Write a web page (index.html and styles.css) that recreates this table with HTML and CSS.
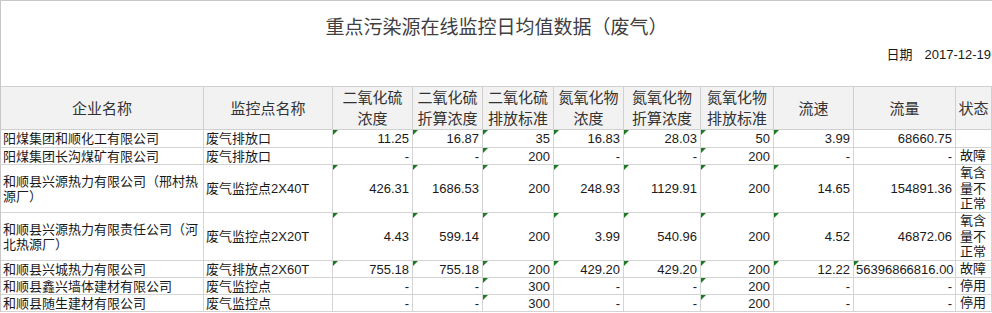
FILE: index.html
```html
<!DOCTYPE html>
<html lang="zh-CN">
<head>
<meta charset="utf-8">
<title>重点污染源在线监控日均值数据（废气）</title>
<link rel="stylesheet" href="styles.css">
</head>
<body>
<div class="sheet">
  <div class="head">
    <div class="title">重点污染源在线监控日均值数据（废气）</div>
    <div class="date"><span class="date-label">日期</span><span class="date-value">2017-12-19</span></div>
  </div>
  <table class="grid">
    <colgroup>
      <col class="c1"><col class="c2"><col class="c3"><col class="c4"><col class="c5"><col class="c6"><col class="c7"><col class="c8"><col class="c9"><col class="c10"><col class="c11">
    </colgroup>
    <thead>
      <tr>
        <th>企业名称</th>
        <th>监控点名称</th>
        <th>二氧化硫<br>浓度</th>
        <th>二氧化硫<br>折算浓度</th>
        <th>二氧化硫<br>排放标准</th>
        <th>氮氧化物<br>浓度</th>
        <th>氮氧化物<br>折算浓度</th>
        <th>氮氧化物<br>排放标准</th>
        <th>流速</th>
        <th>流量</th>
        <th>状态</th>
      </tr>
    </thead>
    <tbody>
      <tr class="r18">
        <td>阳煤集团和顺化工有限公司</td>
        <td>废气排放口</td>
        <td class="n t">11.25</td>
        <td class="n t">16.87</td>
        <td class="n t">35</td>
        <td class="n t">16.83</td>
        <td class="n t">28.03</td>
        <td class="n t">50</td>
        <td class="n t">3.99</td>
        <td class="n">68660.75</td>
        <td class="s"></td>
      </tr>
      <tr class="r17">
        <td>阳煤集团长沟煤矿有限公司</td>
        <td>废气排放口</td>
        <td class="n">-</td>
        <td class="n">-</td>
        <td class="n t">200</td>
        <td class="n">-</td>
        <td class="n">-</td>
        <td class="n t">200</td>
        <td class="n">-</td>
        <td class="n">-</td>
        <td class="s">故障</td>
      </tr>
      <tr class="r48">
        <td>和顺县兴源热力有限公司（邢村热源厂）</td>
        <td>废气监控点2X40T</td>
        <td class="n t">426.31</td>
        <td class="n t">1686.53</td>
        <td class="n t">200</td>
        <td class="n t">248.93</td>
        <td class="n t">1129.91</td>
        <td class="n t">200</td>
        <td class="n t">14.65</td>
        <td class="n">154891.36</td>
        <td class="s">氧含量不正常</td>
      </tr>
      <tr class="r48">
        <td>和顺县兴源热力有限责任公司（河北热源厂）</td>
        <td>废气监控点2X20T</td>
        <td class="n t">4.43</td>
        <td class="n t">599.14</td>
        <td class="n t">200</td>
        <td class="n t">3.99</td>
        <td class="n t">540.96</td>
        <td class="n t">200</td>
        <td class="n t">4.52</td>
        <td class="n">46872.06</td>
        <td class="s">氧含量不正常</td>
      </tr>
      <tr class="r17">
        <td>和顺县兴城热力有限公司</td>
        <td>废气排放点2X60T</td>
        <td class="n t">755.18</td>
        <td class="n t">755.18</td>
        <td class="n t">200</td>
        <td class="n t">429.20</td>
        <td class="n t">429.20</td>
        <td class="n t">200</td>
        <td class="n t">12.22</td>
        <td class="n t">56396866816.00</td>
        <td class="s">故障</td>
      </tr>
      <tr class="r17">
        <td>和顺县鑫兴墙体建材有限公司</td>
        <td>废气监控点</td>
        <td class="n">-</td>
        <td class="n">-</td>
        <td class="n t">300</td>
        <td class="n">-</td>
        <td class="n">-</td>
        <td class="n t">200</td>
        <td class="n">-</td>
        <td class="n">-</td>
        <td class="s">停用</td>
      </tr>
      <tr class="r17">
        <td>和顺县随生建材有限公司</td>
        <td>废气监控点</td>
        <td class="n">-</td>
        <td class="n">-</td>
        <td class="n t">300</td>
        <td class="n">-</td>
        <td class="n">-</td>
        <td class="n t">200</td>
        <td class="n">-</td>
        <td class="n">-</td>
        <td class="s">停用</td>
      </tr>
    </tbody>
  </table>
</div>
</body>
</html>
```

FILE: styles.css
```css
html, body {
  margin: 0;
  padding: 0;
  background: #ffffff;
}

body {
  font-family: "Liberation Sans", "Noto Sans CJK SC", sans-serif;
  color: #1a1a1a;
}

.sheet {
  width: 991px;
  border-top: 1px solid #c8c8c8;
  border-left: 1px solid #c8c8c8;
}

.head {
  height: 85px;
  box-sizing: border-box;
  padding-top: 14px;
}

.title {
  text-align: center;
  font-size: 19px;
  line-height: 26px;
  color: #404040;
}

.date {
  margin-top: 6px;
  text-align: right;
  padding-right: 1px;
  font-size: 13px;
  line-height: 16px;
  color: #1a1a1a;
}

.date-label {
  margin-right: 12px;
}

.grid {
  table-layout: fixed;
  border-collapse: separate;
  border-spacing: 0;
  width: 991px;
  font-size: 13px;
}

.c1 { width: 203px; }
.c2 { width: 129px; }
.c3 { width: 80px; }
.c4 { width: 70px; }
.c5 { width: 71px; }
.c6 { width: 70px; }
.c7 { width: 77px; }
.c8 { width: 73px; }
.c9 { width: 80px; }
.c10 { width: 102px; }
.c11 { width: 36px; }

.grid th,
.grid td {
  box-sizing: border-box;
  border-right: 1px solid #d4d4d4;
  border-bottom: 1px solid #d4d4d4;
  padding: 0 3px 0 2px;
  vertical-align: middle;
  overflow: hidden;
}

.grid th {
  height: 44px;
  border-top: 1px solid #d0d0d0;
  border-right-color: #d0d0d0;
  border-bottom-color: #d0d0d0;
  background: #f2f2f2;
  font-weight: normal;
  font-size: 15px;
  line-height: 21px;
  color: #333333;
  text-align: center;
  padding: 0;
  white-space: nowrap;
}

.grid td {
  line-height: 15px;
  text-align: left;
}

.r17 td { height: 17px; }
.r18 td { height: 18px; }
.r48 td { height: 48px; }

.grid td.n {
  text-align: right;
  white-space: nowrap;
}

.grid td.s {
  padding: 0 1px 0 4px;
  line-height: 15.5px;
}

.grid td.t {
  position: relative;
}

.grid td.t::before {
  content: "";
  position: absolute;
  top: 0;
  left: 0;
  width: 0;
  height: 0;
  border-top: 5px solid #1e7b25;
  border-right: 5px solid transparent;
}
```
